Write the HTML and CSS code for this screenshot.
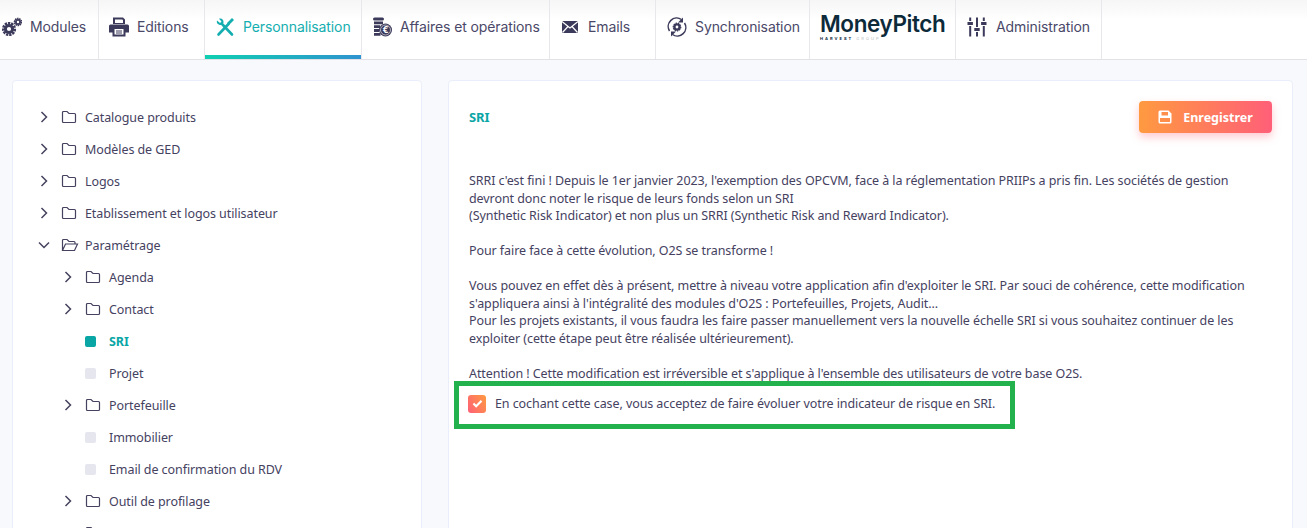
FILE: index.html
```html
<!DOCTYPE html>
<html lang="fr">
<head>
    <meta charset="UTF-8">
    <meta name="viewport" content="width=device-width, initial-scale=1.0">
    <title>Personnalisation - SRI</title>
    <link rel="stylesheet" href="styles.css">
</head>
<body>
    <!-- Barre d'onglets -->
    <nav class="tabs">
        <a class="tab tab-modules">
            <svg class="tab-icon" viewBox="0 0 20 20" fill="none" stroke="#3c3a5a"><circle cx="7" cy="12" r="5.800" stroke-width="2.600" stroke-dasharray="2.300 .9"/><circle cx="7" cy="12" r="3.600" stroke-width="3"/><circle cx="16" cy="5" r="3.400" stroke-width="1.800" stroke-dasharray="1.500 .6"/><circle cx="16" cy="5" r="2.100" stroke-width="1.800"/></svg>
            <span>Modules</span>
        </a>
        <a class="tab tab-editions">
            <svg class="tab-icon" viewBox="0 0 20 20"><path fill="#3c3a5a" fill-rule="evenodd" d="M4 0.500h10l2 2V7H4zM6 2.500V6h8V3.200l-.7-.7zM1.500 7.500h17A1.500 1.500 0 0 1 20 9v6.500h-3.500v4h-13v-4H0V9a1.500 1.500 0 0 1 1.500-1.500zM5.500 12v5.500h9V12zM7 13.500h6v1H7zM7 15.500h6v1H7z"/></svg>
            <span>Editions</span>
        </a>
        <a class="tab tab-perso active">
            <svg class="tab-icon" viewBox="0 0 20 20" fill="none" stroke="#14aeb0" stroke-linecap="round"><path stroke-width="2.600" d="M7.500 7.500L17 17.500"/><path fill="#14aeb0" stroke="none" d="M2 3.500l3 2.500 1.500-1.500L4 1.700c2.500-1 5 1 4.500 4L7 8C4 8.500 1 6.500 2 3.500z"/><path stroke-width="2.600" d="M3.500 17.500L13.500 7"/><path fill="#14aeb0" stroke="none" d="M12 6l5-5 2 2-5 5z"/></svg>
            <span>Personnalisation</span>
        </a>
        <a class="tab tab-affaires">
            <svg class="tab-icon" viewBox="0 0 20 20"><path fill="#3c3a5a" d="M2.500 .5h8a1 1 0 0 1 0 3h-8a1 1 0 0 1 0-3zM2 4.500h9v2.800H2zM2 8.300h6v2.800H2zM2 12.100h5v2.800H2zM2 15.900h6.500v2.800H2z"/><circle cx="13.500" cy="13" r="6.500" fill="#3c3a5a"/><circle cx="13.500" cy="13" r="5" fill="none" stroke="#fff" stroke-width=".6"/><text x="13.500" y="16" text-anchor="middle" class="euro">€</text></svg>
            <span>Affaires et opérations</span>
        </a>
        <a class="tab tab-emails">
            <svg class="tab-icon" viewBox="0 0 20 20"><rect x="2" y="4" width="16" height="12" fill="#3c3a5a"/><path d="M2 4.500l8 6.500 8-6.500M2.500 15.500l5.500-6M17.500 15.500l-5.500-6" fill="none" stroke="#fff" stroke-width="1.200"/></svg>
            <span>Emails</span>
        </a>
        <a class="tab tab-synchro">
            <svg class="tab-icon" viewBox="0 0 20 20" fill="none" stroke="#3c3a5a" stroke-width="1.500"><path d="M2.500 14A8.500 8.500 0 0 1 14.500 2.500M17.500 6A8.500 8.500 0 0 1 5.500 17.500"/><path fill="#3c3a5a" stroke="none" d="M16 .5v5h-5zM4 19.500v-5h5z"/><circle cx="10" cy="10" r="2.600" stroke-width="2.400"/><circle cx="10" cy="10" r="3.800" stroke-width="1.200" stroke-dasharray="1.300 1"/></svg>
            <span>Synchronisation</span>
        </a>
        <a class="tab tab-logo">
            <span class="logo">
                <span class="logo-name">MoneyPitch</span>
                <span class="logo-sub"><b>HARVEST</b> GROUP</span>
            </span>
        </a>
        <a class="tab tab-admin">
            <svg class="tab-icon" viewBox="0 0 20 20" fill="#3c3a5a"><path d="M2.200 .5h2v3.500h-2zM.5 5h5.400v3H.5zM2.200 9h2v10.500h-2zM9 .5h2v9.500H9zM7.300 11h5.400v3H7.300zM9 15h2v4.500H9zM15.800 .5h2v3.500h-2zM14.100 5h5.400v3h-5.400zM15.800 9h2v10.500h-2z"/></svg>
            <span>Administration</span>
        </a>
    </nav>

    <main class="page">
        <!-- Arborescence de gauche -->
        <aside class="card tree">
            <div class="row"><svg class="chev" viewBox="0 0 8 12"><path d="M1.500 1l5 5-5 5"/></svg><svg class="folder" viewBox="0 0 16 14"><path d="M1.500 11.500v-9a1 1 0 0 1 1-1h3.500l2 2h5.500a1 1 0 0 1 1 1v7a1 1 0 0 1-1 1h-11a1 1 0 0 1-1-1z"/></svg><span>Catalogue produits</span></div>
            <div class="row"><svg class="chev" viewBox="0 0 8 12"><path d="M1.500 1l5 5-5 5"/></svg><svg class="folder" viewBox="0 0 16 14"><path d="M1.500 11.500v-9a1 1 0 0 1 1-1h3.500l2 2h5.500a1 1 0 0 1 1 1v7a1 1 0 0 1-1 1h-11a1 1 0 0 1-1-1z"/></svg><span>Modèles de GED</span></div>
            <div class="row"><svg class="chev" viewBox="0 0 8 12"><path d="M1.500 1l5 5-5 5"/></svg><svg class="folder" viewBox="0 0 16 14"><path d="M1.500 11.500v-9a1 1 0 0 1 1-1h3.500l2 2h5.500a1 1 0 0 1 1 1v7a1 1 0 0 1-1 1h-11a1 1 0 0 1-1-1z"/></svg><span>Logos</span></div>
            <div class="row"><svg class="chev" viewBox="0 0 8 12"><path d="M1.500 1l5 5-5 5"/></svg><svg class="folder" viewBox="0 0 16 14"><path d="M1.500 11.500v-9a1 1 0 0 1 1-1h3.500l2 2h5.500a1 1 0 0 1 1 1v7a1 1 0 0 1-1 1h-11a1 1 0 0 1-1-1z"/></svg><span>Etablissement et logos utilisateur</span></div>
            <div class="row"><svg class="chev chev-open" viewBox="0 0 12 8"><path d="M1 1.500l5 5 5-5"/></svg><svg class="folder folder-open" viewBox="0 0 18 14"><path d="M1.500 12V2.500a1 1 0 0 1 1-1h3.500l2 2h5a1 1 0 0 1 1 1V6M1.500 12.500l3-6.500h12l-3 6.500z"/></svg><span>Paramétrage</span></div>
            <div class="row sub"><svg class="chev" viewBox="0 0 8 12"><path d="M1.500 1l5 5-5 5"/></svg><svg class="folder" viewBox="0 0 16 14"><path d="M1.500 11.500v-9a1 1 0 0 1 1-1h3.500l2 2h5.500a1 1 0 0 1 1 1v7a1 1 0 0 1-1 1h-11a1 1 0 0 1-1-1z"/></svg><span>Agenda</span></div>
            <div class="row sub"><svg class="chev" viewBox="0 0 8 12"><path d="M1.500 1l5 5-5 5"/></svg><svg class="folder" viewBox="0 0 16 14"><path d="M1.500 11.500v-9a1 1 0 0 1 1-1h3.500l2 2h5.500a1 1 0 0 1 1 1v7a1 1 0 0 1-1 1h-11a1 1 0 0 1-1-1z"/></svg><span>Contact</span></div>
            <div class="row sub leaf selected"><i class="dot"></i><span>SRI</span></div>
            <div class="row sub leaf"><i class="dot"></i><span>Projet</span></div>
            <div class="row sub"><svg class="chev" viewBox="0 0 8 12"><path d="M1.500 1l5 5-5 5"/></svg><svg class="folder" viewBox="0 0 16 14"><path d="M1.500 11.500v-9a1 1 0 0 1 1-1h3.500l2 2h5.500a1 1 0 0 1 1 1v7a1 1 0 0 1-1 1h-11a1 1 0 0 1-1-1z"/></svg><span>Portefeuille</span></div>
            <div class="row sub leaf"><i class="dot"></i><span>Immobilier</span></div>
            <div class="row sub leaf"><i class="dot"></i><span>Email de confirmation du RDV</span></div>
            <div class="row sub"><svg class="chev" viewBox="0 0 8 12"><path d="M1.500 1l5 5-5 5"/></svg><svg class="folder" viewBox="0 0 16 14"><path d="M1.500 11.500v-9a1 1 0 0 1 1-1h3.500l2 2h5.500a1 1 0 0 1 1 1v7a1 1 0 0 1-1 1h-11a1 1 0 0 1-1-1z"/></svg><span>Outil de profilage</span></div>
            <!-- ligne suivante, coupee par le bas de la fenetre -->
            <div class="row sub leaf"><svg class="folder" viewBox="0 0 16 14"><path d="M1.500 11.500v-9a1 1 0 0 1 1-1h3.500l2 2h5.500a1 1 0 0 1 1 1v7a1 1 0 0 1-1 1h-11a1 1 0 0 1-1-1z"/></svg></div>
        </aside>

        <!-- Contenu -->
        <section class="card content">
            <header class="content-head">
                <h1>SRI</h1>
                <button class="save">
                    <svg viewBox="0 0 14 14"><path fill="#fff" fill-rule="evenodd" d="M2 .5h8.500L13.500 3.500V12a1.500 1.500 0 0 1-1.500 1.500H2A1.500 1.500 0 0 1 .5 12V2A1.500 1.500 0 0 1 2 .5zM3.500 2v3.500h6.500V2zM2 8v4h10V8z"/></svg>
                    Enregistrer
                </button>
            </header>
            <div class="text">
                <p>SRRI c'est fini ! Depuis le 1er janvier 2023, l'exemption des OPCVM, face à la réglementation PRIIPs a pris fin. Les sociétés de gestion<br>devront donc noter le risque de leurs fonds selon un SRI<br>(Synthetic Risk Indicator) et non plus un SRRI (Synthetic Risk and Reward Indicator).</p>
                <p>Pour faire face à cette évolution, O2S se transforme !</p>
                <p>Vous pouvez en effet dès à présent, mettre à niveau votre application afin d'exploiter le SRI. Par souci de cohérence, cette modification<br>s'appliquera ainsi à l'intégralité des modules d'O2S : Portefeuilles, Projets, Audit...<br>Pour les projets existants, il vous faudra les faire passer manuellement vers la nouvelle échelle SRI si vous souhaitez continuer de les<br>exploiter (cette étape peut être réalisée ultérieurement).</p>
                <p>Attention ! Cette modification est irréversible et s'applique à l'ensemble des utilisateurs de votre base O2S.</p>
            </div>
            <label class="accept">
                <span class="check"><svg viewBox="0 0 12 10"><path d="M1.500 5l3 3 6-6"/></svg></span>
                <span>En cochant cette case, vous acceptez de faire évoluer votre indicateur de risque en SRI.</span>
            </label>
        </section>
    </main>
</body>
</html>
```

FILE: styles.css
```css
body {
    margin: 0;
    height: 528px;
    overflow: hidden;
    background-color: #f8f9fc;
    color: #45425f;
    font-family: "Noto Sans", "Liberation Sans", sans-serif;
    font-size: 12.500px;
    letter-spacing: -.08px;
}

/* Onglets */
.tabs {
    display: flex;
    box-sizing: border-box;
    height: 60px;
    background: linear-gradient(#f6f6f6, #fff 20px);
    border-bottom: 1px solid #e2e2e6;
    font-family: Inter, "Liberation Sans", sans-serif;
    font-size: 14px;
    letter-spacing: -.1px;
    color: #4a4868;
}

.tab {
    display: flex;
    align-items: center;
    gap: 8px;
    box-sizing: border-box;
    padding: 0 0 7px 10px;
    border-right: 1px solid #e8e8ec;
    white-space: nowrap;
}

.tab-icon {
    width: 20px;
    height: 20px;
    margin-top: 2px;
    flex: none;
}

.euro {
    fill: #fff;
    font-size: 9px;
    font-weight: 700;
}

.tab-modules { width: 99px; padding-left: 2px; }
.tab-editions { width: 106px; }
.tab-perso { width: 157px; }
.tab-affaires { width: 188px; }
.tab-emails { width: 106px; }
.tab-synchro { width: 154px; padding-left: 11px; }
.tab-logo { width: 146px; }
.tab-admin { width: 146px; padding-left: 11px; gap: 9px; }

.active {
    color: #14aeb0;
    background: linear-gradient(90deg, #0fcfb0, #2f93d0) bottom / 100% 4px no-repeat;
}

/* Logo */
.logo {
    display: flex;
    flex-direction: column;
    color: #0d2a3a;
}

.logo-name {
    font-size: 22.500px;
    font-weight: 600;
    line-height: 24px;
    letter-spacing: -.4px;
}

.logo-sub {
    font-size: 4px;
    line-height: 5px;
    letter-spacing: 2px;
    color: #b5bcc2;
}

.logo-sub b {
    color: #0d2a3a;
}

/* Page */
.page {
    display: flex;
    align-items: flex-start;
    gap: 26px;
    padding: 20px 14px 0 12px;
}

.card {
    background: #fff;
    border: 1px solid #e9eefa;
    border-radius: 4px;
    box-sizing: border-box;
    height: 600px;
}

.tree {
    width: 410px;
    flex: none;
    padding: 20px 0 0 27px;
}

.row {
    display: flex;
    align-items: center;
    height: 32px;
}

.row.sub {
    padding-left: 24px;
}

.chev {
    width: 8px;
    height: 12px;
    margin-right: 13px;
    fill: none;
    stroke: #45425f;
    stroke-width: 1.500;
}

.chev-open {
    width: 12px;
    height: 8px;
    margin: 0 11px 0 -2px;
}

.folder {
    width: 16px;
    height: 14px;
    margin-right: 8px;
    fill: none;
    stroke: #45425f;
    stroke-width: 1.200;
}

.folder-open {
    width: 18px;
    margin-right: 6px;
}

.leaf {
    /* pas de chevron : on decale la pastille sous le dossier */
    margin-left: 21px;
}

.dot {
    width: 11px;
    height: 11px;
    margin-right: 13px;
    border-radius: 2px;
    background-color: #e6e6ef;
}

.selected {
    color: #0aa6a6;
    font-weight: 700;
}

.selected .dot {
    background-color: #0aa6a6;
}

/* Contenu */
.content {
    flex: 1;
    padding: 20px 20px 0 20px;
}

.content-head {
    display: flex;
    justify-content: space-between;
    align-items: flex-start;
    height: 71px;
}

.content-head h1 {
    margin: 7px 0 0;
    font-size: 13px;
    font-weight: 700;
    color: #0aa6a6;
}

.save {
    display: flex;
    align-items: center;
    justify-content: center;
    gap: 11px;
    width: 133px;
    height: 32px;
    border: none;
    border-radius: 4px;
    background: linear-gradient(90deg, #ff9a40, #ff5f78);
    box-shadow: 0 4px 8px rgba(255, 100, 120, .35);
    color: #fff;
    font: 700 12.500px "Noto Sans", sans-serif;
}

.save svg {
    width: 14px;
    height: 14px;
}

.text {
    margin-bottom: -1px;
}

.text p {
    margin: 0 0 17.500px;
    line-height: 17.500px;
}

.text p:last-child {
    margin-bottom: 0;
}

.accept {
    display: flex;
    align-items: center;
    gap: 9px;
    box-sizing: border-box;
    width: 561px;
    height: 48px;
    margin-left: -15px;
    padding: 0 0 3px 9px;
    border: 5px solid #22b14c;
}

.check {
    display: flex;
    align-items: center;
    justify-content: center;
    width: 18px;
    height: 18px;
    border-radius: 3px;
    background: linear-gradient(60deg, #ff5f78, #ff9a40);
}

.check svg {
    width: 11px;
    height: 9px;
    fill: none;
    stroke: #fff;
    stroke-width: 2.400;
}
```
